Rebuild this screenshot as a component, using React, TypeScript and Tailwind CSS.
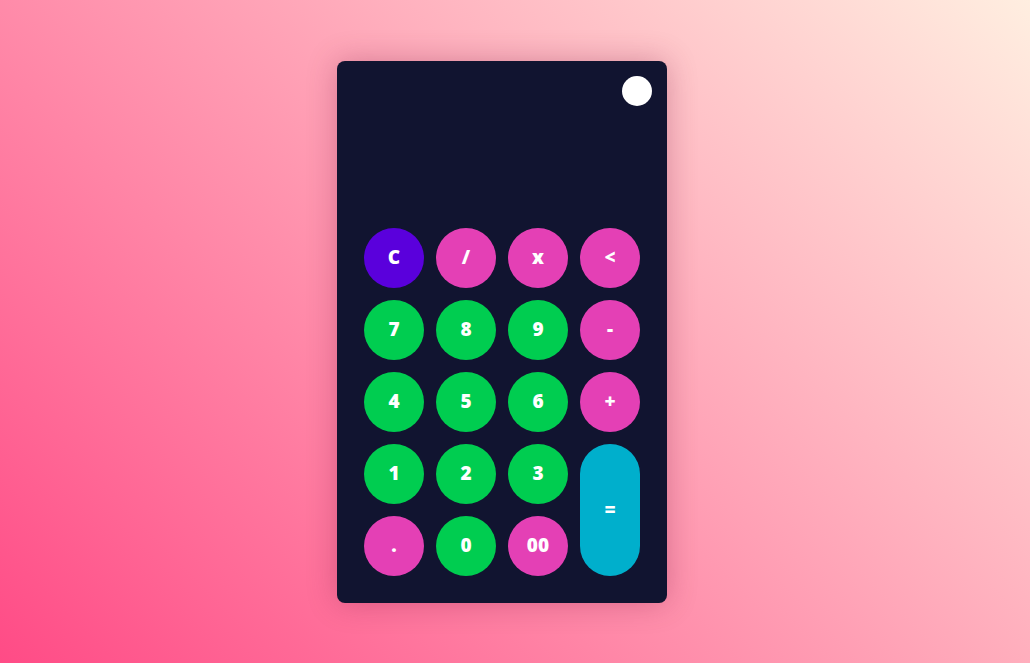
const keys = [
  { label: "C", color: "bg-[#5a00dc]" },
  { label: "/", color: "bg-[#e440b5]" },
  { label: "x", color: "bg-[#e440b5]" },
  { label: "<", color: "bg-[#e440b5]" },
  { label: "7", color: "bg-[#00cd50]" },
  { label: "8", color: "bg-[#00cd50]" },
  { label: "9", color: "bg-[#00cd50]" },
  { label: "-", color: "bg-[#e440b5]" },
  { label: "4", color: "bg-[#00cd50]" },
  { label: "5", color: "bg-[#00cd50]" },
  { label: "6", color: "bg-[#00cd50]" },
  { label: "+", color: "bg-[#e440b5]" },
  { label: "1", color: "bg-[#00cd50]" },
  { label: "2", color: "bg-[#00cd50]" },
  { label: "3", color: "bg-[#00cd50]" },
  { label: "=", color: "bg-[#00afcc] row-span-2 h-[132px]" },
  { label: ".", color: "bg-[#e440b5]" },
  { label: "0", color: "bg-[#00cd50]" },
  { label: "00", color: "bg-[#e440b5]" },
]

export default function App() {
  return (
    <div className="flex h-[663px] w-full items-center justify-center bg-[linear-gradient(45deg,#ff4b86,#ffeee0)] pr-[26px] font-['Open_Sans',sans-serif]">
      <div className="relative flex w-[330px] flex-col rounded-lg bg-[#111430] p-[27px] shadow-[0_0_30px_rgba(120,20,60,0.3)]">
        {/* theme toggle */}
        <div className="absolute right-[15px] top-[15px] h-[30px] w-[30px] rounded-full bg-white" />

        {/* display */}
        <div className="h-[140px]" />

        <div className="grid grid-cols-[repeat(4,60px)] gap-3">
          {keys.map((k) => (
            <button
              key={k.label}
              className={`flex h-[60px] w-[60px] items-center justify-center rounded-full text-[19px] font-extrabold text-white ${k.color}`}
            >
              {k.label}
            </button>
          ))}
        </div>
      </div>
    </div>
  )
}
